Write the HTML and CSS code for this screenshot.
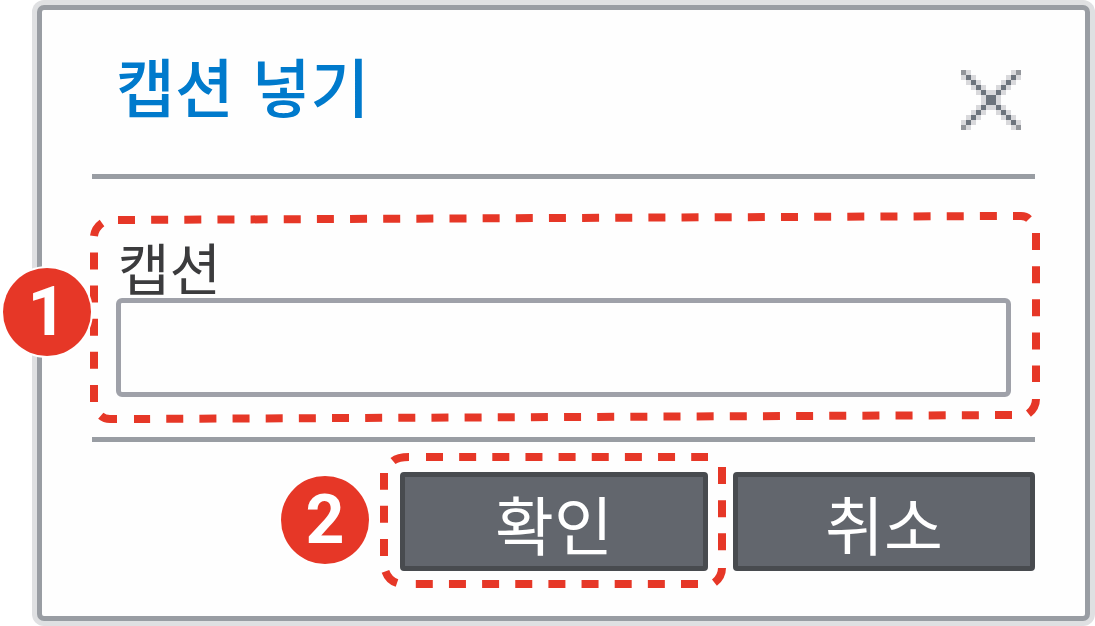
FILE: index.html
```html
<!DOCTYPE html>
<html lang="ko">
<head>
<meta charset="utf-8">
<meta name="viewport" content="width=device-width, initial-scale=1">
<title>캡션 넣기</title>
<link rel="stylesheet" href="styles.css">
</head>
<body>
<main class="dialog" role="dialog" aria-labelledby="dialog-title">
  <header class="header">
    <h1 class="title" id="dialog-title">캡션 넣기</h1>
    <button class="close" type="button" aria-label="닫기">
      <svg class="close-icon" viewBox="0 0 12 12" shape-rendering="crispEdges" aria-hidden="true">
        <path fill="#d9d9dc" d="M0 0h2v1h-2zM10 0h2v1h-2zM0 1h3v1h-3zM9 1h3v1h-3zM1 2h3v1h-3zM8 2h3v1h-3zM2 3h3v1h-3zM7 3h3v1h-3zM3 4h6v1h-6zM4 5h4v2h-4zM3 7h6v1h-6zM2 8h3v1h-3zM7 8h3v1h-3zM1 9h3v1h-3zM8 9h3v1h-3zM0 10h3v1h-3zM9 10h3v1h-3zM0 11h2v1h-2zM10 11h2v1h-2z"/>
        <path fill="#93969b" d="M0 0h1v1h-1zM11 0h1v1h-1zM0 11h1v1h-1zM11 11h1v1h-1z"/>
        <path fill="#6d747d" d="M1 1h1v1h-1zM2 2h1v1h-1zM3 3h1v1h-1zM4 4h1v1h-1zM5 5h2v2h-2zM7 7h1v1h-1zM8 8h1v1h-1zM9 9h1v1h-1zM10 10h1v1h-1zM10 1h1v1h-1zM9 2h1v1h-1zM8 3h1v1h-1zM7 4h1v1h-1zM4 7h1v1h-1zM3 8h1v1h-1zM2 9h1v1h-1zM1 10h1v1h-1z"/>
      </svg>
    </button>
  </header>

  <section class="content">
    <div class="field">
      <label class="label" for="caption">캡션</label>
      <input class="input" id="caption" type="text">
      <svg class="outline" viewBox="0 0 950 211" preserveAspectRatio="none" aria-hidden="true">
        <path d="M28 8L908 4M923 4H931Q936 4 939 7M946 21V170M946 187Q946 196 938 202M922 203L44 207M27 207H20Q14 207 10 203M4 190V38M4 24Q5 16 12 11"/>
      </svg>
      <span class="badge badge-one">1</span>
    </div>
  </section>

  <footer class="footer">
    <div class="confirm">
      <span class="badge badge-two">2</span>
      <button class="button" type="button">확인</button>
      <svg class="outline" viewBox="0 0 346 135" preserveAspectRatio="none" aria-hidden="true">
        <path d="M13 8Q18 4 29 4M46 4H328M342 14V98M342 115Q342 124 334 130M318 131H34M17 130Q8 127 5 117M4 103V20"/>
      </svg>
    </div>
    <button class="button" type="button">취소</button>
  </footer>
</main>
</body>
</html>
```
FILE: styles.css
```css
* {
  box-sizing: border-box;
}

body {
  margin: 0;
  padding: 5px 5px 5px 37px;
  background: #fff;
  font-family: "Noto Sans CJK KR", sans-serif;
  overflow: hidden;
}

.dialog {
  padding: 0 50px 45px;
  border: 5px solid #999da3;
  border-radius: 7px;
  background: #fefefe;
  box-shadow: 0 0 0 5px #dfe0e2;
}

.header {
  display: flex;
  align-items: flex-start;
  justify-content: space-between;
  height: 169px;
  padding: 38px 14px 0 24px;
  border-bottom: 5px solid #999da3;
}

.title {
  margin: 0;
  color: #007acc;
  font-size: 64px;
  font-weight: 500;
  line-height: 72px;
}

.close {
  display: flex;
  margin-top: 22px;
  padding: 0;
  border: 0;
  background: none;
}

.close-icon {
  width: 60px;
  height: 60px;
}

.content {
  padding: 59px 24px 40px;
  border-bottom: 5px solid #999da3;
}

.field {
  position: relative;
}

.label {
  display: block;
  padding: 0 2px 4px;
  color: #3b3b3d;
  font-size: 56px;
  line-height: 56px;
}

.input {
  display: block;
  width: 100%;
  height: 99px;
  padding: 0 20px;
  border: 5px solid #9fa1a9;
  border-radius: 6px;
  background: #fefefe;
  font: inherit;
  font-size: 56px;
}

.outline {
  position: absolute;
  overflow: visible;
  fill: none;
  stroke: #e63727;
  stroke-width: 8;
  stroke-dasharray: 17 16.15;
  pointer-events: none;
}

.field .outline {
  top: -26px;
  left: -26px;
  width: calc(100% + 55px);
  height: 211px;
}

.footer {
  display: flex;
  justify-content: flex-end;
  gap: 25px;
  padding-top: 30px;
}

.confirm {
  position: relative;
  flex: 0 1 308px;
}

.confirm .outline {
  top: -19px;
  left: -20px;
  width: calc(100% + 38px);
  height: 135px;
}

.button {
  flex: 0 1 302px;
  height: 99px;
  padding: 0;
  border: 5px solid #484b4f;
  border-radius: 4px;
  background: #62666d;
  color: #fff;
  font: inherit;
  font-size: 64px;
  line-height: 72px;
}

.confirm .button {
  width: 100%;
}

.badge {
  position: absolute;
  display: flex;
  align-items: center;
  justify-content: center;
  width: 88px;
  height: 88px;
  border-radius: 50%;
  background: #e63727;
  box-shadow: 0 0 0 2px #fff;
  color: #fff;
  font: bold 68px/88px Roboto, Arial, sans-serif;
}

.badge-one {
  top: 30px;
  left: -113px;
}

.badge-two {
  top: 4px;
  left: -119px;
}
```
